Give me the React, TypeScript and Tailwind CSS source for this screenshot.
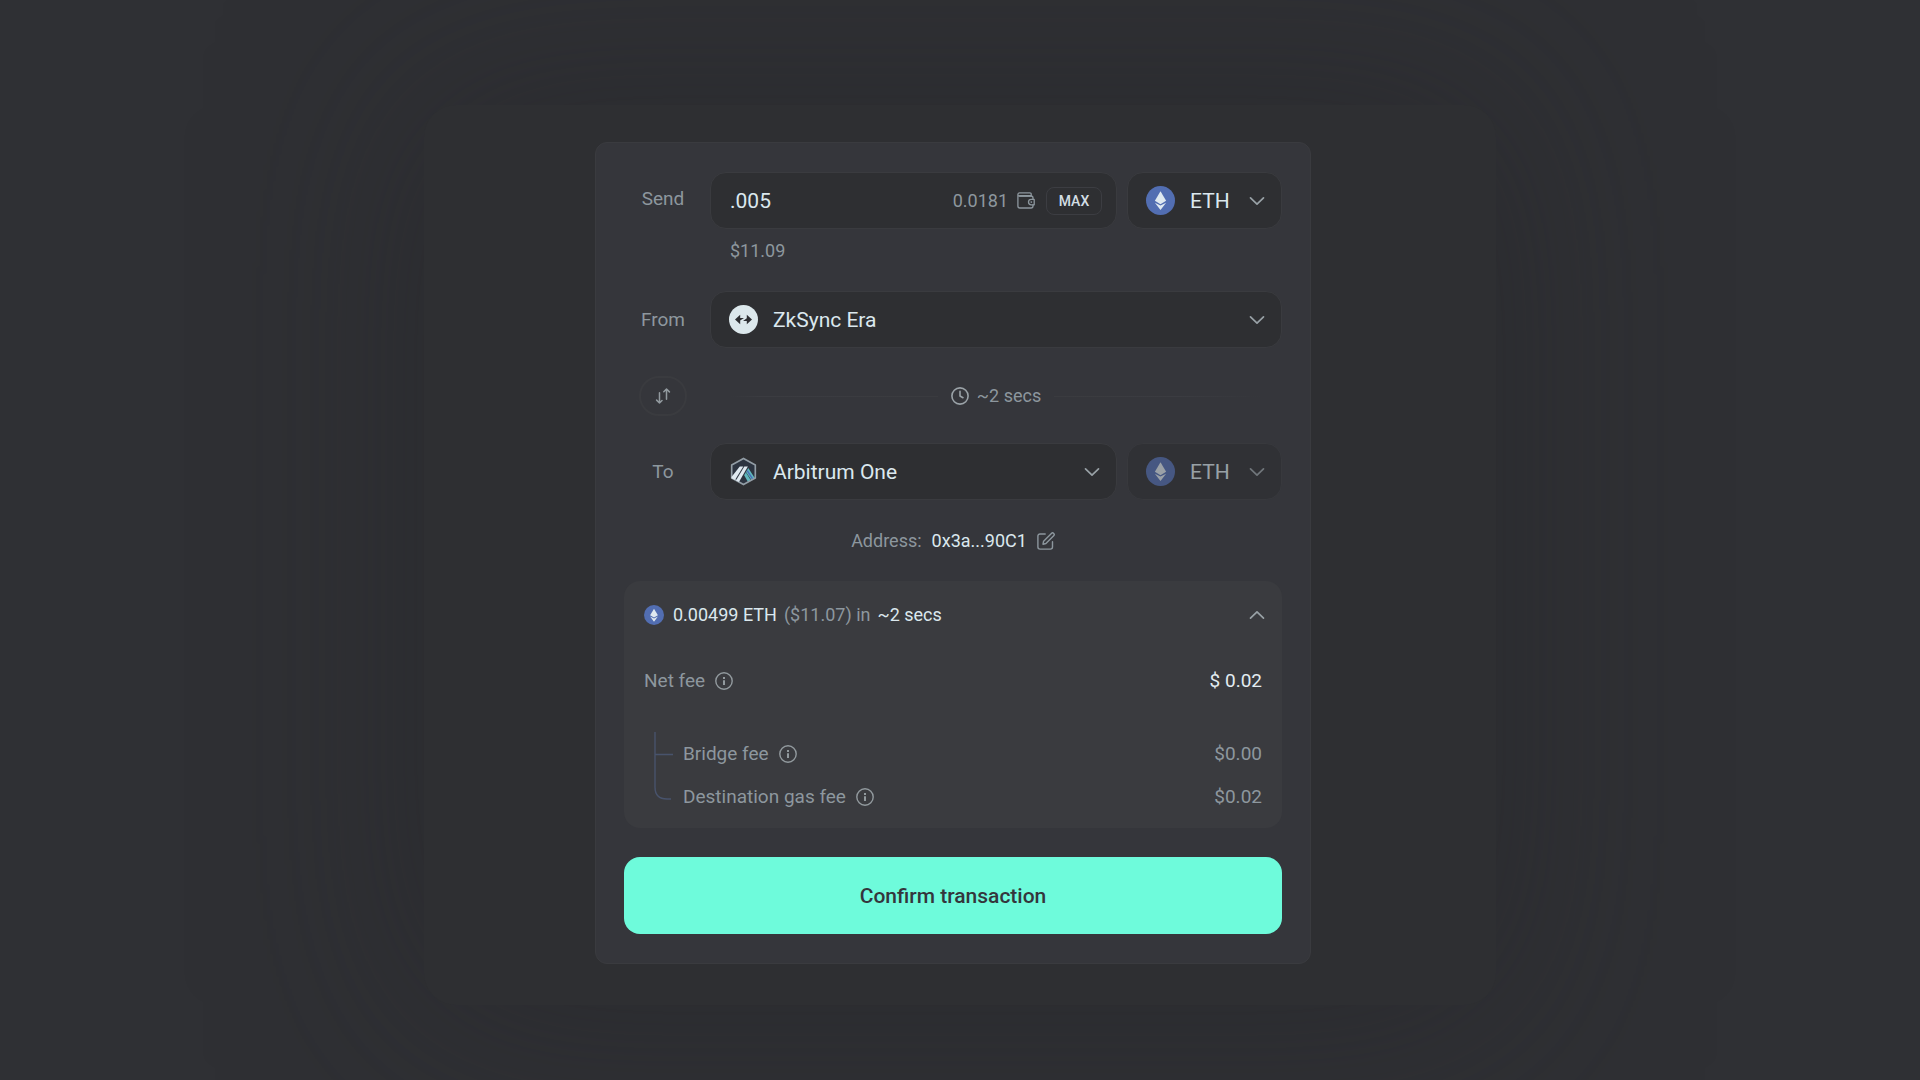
import { useState } from "react";
import type { ReactNode } from "react";

function EthIcon({ className }: { className: string }) {
  return (
    <svg viewBox="0 0 32 32" className={className} aria-hidden="true">
      <circle cx="16" cy="16" r="16" fill="#526eb2" />
      <path d="M16 5.8 22.2 16.4 16 20 9.8 16.4Z" fill="#dfe9f0" />
      <path d="M9.8 18.4 16 21.6 22.2 18.4 16 26.6Z" fill="#dfe9f0" />
    </svg>
  );
}

function ZkSyncIcon({ className }: { className: string }) {
  return (
    <svg viewBox="0 0 29 29" className={className} aria-hidden="true">
      <circle cx="14.5" cy="14.5" r="14.5" fill="#dce8ec" />
      <path d="M6 14.5 11.2 9.8V12.9H15L11.2 15.6V19.2Z" fill="#2e2f33" />
      <path d="M23 14.5 17.8 9.8V13.2L14 16.1H17.8V19.2Z" fill="#2e2f33" />
    </svg>
  );
}

function ArbitrumIcon({ className }: { className: string }) {
  return (
    <svg viewBox="0 0 28 28" className={className} aria-hidden="true">
      <path d="M14 1.4 25.4 7.7V20.3L14 26.6 2.6 20.3V7.7Z" fill="#2c3440" />
      <path d="M16.4 14.6 18.6 10.6 25 20.6 21.8 22.4Z" fill="#5fb8bd" />
      <path d="M14.6 17.6 16.2 14.8 21.2 22.8 18.4 24.2Z" fill="#5fb8bd" />
      <path d="M17.6 13.2 22.8 21.4" stroke="#4a6eb8" strokeWidth="1.4" />
      <path d="M14 1.4 25.4 7.7V20.3L14 26.6 2.6 20.3V7.7Z" fill="none" stroke="#929da5" strokeWidth="1.6" strokeLinejoin="round" />
      <path d="M10.4 9.2H13.8L5.8 22.3 2.4 20.4V19.4Z" fill="#dfe9f0" />
      <path d="M14.8 9.2H18.2L9.6 24.2 6.7 22.6Z" fill="#dfe9f0" />
    </svg>
  );
}

function Chevron({ className, up = false }: { className: string; up?: boolean }) {
  return (
    <svg viewBox="0 0 16 10" className={className} fill="none" stroke="currentColor" strokeWidth="1.7" strokeLinecap="round" strokeLinejoin="round" aria-hidden="true">
      <path d={up ? "M1.5 8.2 8 1.8 14.5 8.2" : "M1.5 1.8 8 8.2 14.5 1.8"} />
    </svg>
  );
}

function WalletIcon({ className }: { className: string }) {
  return (
    <svg viewBox="0 0 18 17" className={className} fill="none" stroke="currentColor" strokeWidth="1.3" strokeLinecap="round" strokeLinejoin="round" aria-hidden="true">
      <path d="M16 7.2V6a2 2 0 0 0-2-2H2.4A1.5 1.5 0 0 1 .9 2.5 1.6 1.6 0 0 1 2.5.9H13a1.2 1.2 0 0 1 1.2 1.2V4M.9 2.5V14a2 2 0 0 0 2 2H14a2 2 0 0 0 2-2v-1.2" />
      <path d="M3 3.9H14" strokeWidth="1.8" />
      <path d="M17.2 7.4h-3a2.7 2.7 0 0 0 0 5.4h3Z" />
      <path d="M14.2 10.1h.2" strokeWidth="1.6" />
    </svg>
  );
}

function SwapIcon({ className }: { className: string }) {
  return (
    <svg viewBox="0 0 16 16" className={className} fill="none" stroke="currentColor" strokeWidth="1.5" strokeLinecap="round" strokeLinejoin="round" aria-hidden="true">
      <path d="M4.5 4.8V15M1.6 12.1 4.5 15 7 12.5M11.5 11.2V1M8.8 3.7 11.5 1 14.4 3.9" />
    </svg>
  );
}

function ClockIcon({ className }: { className: string }) {
  return (
    <svg viewBox="0 0 18 18" className={className} fill="none" stroke="currentColor" strokeWidth="1.6" strokeLinecap="round" strokeLinejoin="round" aria-hidden="true">
      <circle cx="9" cy="9" r="8.1" />
      <path d="M9 4.4V9L12 10.7" />
    </svg>
  );
}

function EditIcon({ className }: { className: string }) {
  return (
    <svg viewBox="0 0 18 18" className={className} fill="none" stroke="currentColor" strokeWidth="1.4" strokeLinecap="round" strokeLinejoin="round" aria-hidden="true">
      <path d="M8.2 2H3A2.1 2.1 0 0 0 .9 4.1V15A2.1 2.1 0 0 0 3 17.1H13.4A2.1 2.1 0 0 0 15.5 15V9.8" />
      <path d="M6 12.2 6.6 9.2 14.4 1.4a1.6 1.6 0 0 1 2.3 2.3L8.9 11.5Z" />
    </svg>
  );
}

function InfoButton({ about }: { about: string }) {
  return (
    <button type="button" aria-label={"About " + about} className="text-[#929a9e]">
      <svg viewBox="0 0 18 18" className="size-[18px]" fill="none" stroke="currentColor" aria-hidden="true">
        <circle cx="9" cy="9" r="8.2" strokeWidth="1.4" />
        <path d="M9 8.2V13" strokeWidth="2" />
        <path d="M9 5V6.9" strokeWidth="2" />
      </svg>
    </button>
  );
}

function Picker({ id, label, value, icon, disabled = false }: { id: string; label: string; value: string; icon: ReactNode; disabled?: boolean }) {
  return (
    <div className={"relative flex items-center " + (disabled ? "opacity-60" : "")}>
      <span className="pointer-events-none absolute left-[19px]">{icon}</span>
      <select
        id={id}
        aria-label={label}
        disabled={disabled}
        className="h-[57px] w-full appearance-none rounded-2xl border border-[#3a3b3f] bg-[#2e2f32] pr-10 pl-[62px] text-[21px] text-[#dbe8ee] opacity-100"
      >
        <option>{value}</option>
      </select>
      <Chevron className="pointer-events-none absolute right-[17px] h-[10px] w-4 text-[#98a1a6]" />
    </div>
  );
}

const rowClass = "grid grid-cols-[78px_minmax(0,1fr)] items-center gap-x-2";
const splitClass = "grid grid-cols-[minmax(0,1fr)_155px] gap-[10px]";

export default function App() {
  const [amount, setAmount] = useState(".005");

  return (
    <main className="flex min-h-screen items-center justify-center bg-[#2f3034] pt-[30px] font-['Roboto',sans-serif] text-[19px] leading-6 text-[#8d979e]">
      <div className="flex w-full max-w-[1072px] justify-center rounded-[32px] bg-[#2e2f32] pt-[37px] pr-[14px] pb-[41px] shadow-[0_0_200px_0_rgba(38,39,42,0.55)]">
        <form className="w-full max-w-[716px] rounded-xl border border-[#3a3b3f] bg-[#35363b] px-7 py-[29px]" onSubmit={(e) => e.preventDefault()}>
          <div className={rowClass}>
            <label htmlFor="amount" className="pb-1 text-center">Send</label>
            <div className={splitClass}>
              <div className="flex h-[57px] items-center rounded-2xl border border-[#3a3b3f] bg-[#2e2f32] pr-[14px] pl-[19px]">
                <input
                  id="amount"
                  value={amount}
                  onChange={(e) => setAmount(e.target.value)}
                  className="min-w-0 flex-1 bg-transparent text-[21px] text-[#dbe8ee] outline-none"
                />
                <span className="text-lg leading-6">0.0181</span>
                <WalletIcon className="ml-[9px] h-[17px] w-[18px] text-[#8d979e]" />
                <button type="button" className="ml-[11px] h-7 w-14 rounded-lg border border-[#3c3d42] text-[14px] font-medium text-[#d3dee4]">
                  MAX
                </button>
              </div>
              <Picker id="send-token" label="Token to send" value="ETH" icon={<EthIcon className="size-[29px]" />} />
            </div>
          </div>
          <p className="mt-[10px] mb-7 pl-[106px] text-lg leading-6">$11.09</p>

          <div className={rowClass}>
            <label htmlFor="from" className="text-center">From</label>
            <Picker id="from" label="From" value="ZkSync Era" icon={<ZkSyncIcon className="size-[29px]" />} />
          </div>

          <div className={rowClass + " mt-7 mb-[27px]"}>
            <button type="button" aria-label="Swap networks" className="mx-auto flex h-10 w-12 items-center justify-center rounded-full border-2 border-[#3a3b3f]">
              <SwapIcon className="size-4 text-[#929a9f]" />
            </button>
            <div className="flex items-center px-5">
              <span className="h-px flex-1 bg-linear-to-r from-transparent via-[#3b3c41] via-15% to-[#3a3b3f]" />
              <ClockIcon className="ml-[13px] size-[18px] text-[#9aa2a7]" />
              <span className="mr-[13px] ml-2 text-lg leading-6">~2 secs</span>
              <span className="h-px flex-1 bg-linear-to-l from-transparent via-[#3b3c41] via-40% to-[#3a3b3f]" />
            </div>
          </div>

          <div className={rowClass}>
            <label htmlFor="to" className="text-center">To</label>
            <div className={splitClass}>
              <Picker id="to" label="To" value="Arbitrum One" icon={<ArbitrumIcon className="size-[29px]" />} />
              <Picker id="to-token" label="Token to receive" value="ETH" icon={<EthIcon className="size-[29px]" />} disabled />
            </div>
          </div>

          <div className="mt-[29px] mb-7 flex items-center justify-center text-lg leading-6">
            <span>Address:</span>
            <span className="ml-[10px] text-[#dbe8ee]">0x3a...90C1</span>
            <button type="button" aria-label="Edit address" className="ml-[10px] text-[#8d979e]">
              <EditIcon className="size-[18px]" />
            </button>
          </div>

          <section className="rounded-2xl bg-[#3a3b3f] px-5 pt-[22px] pb-[19px]">
            <button type="button" aria-expanded="true" className="flex w-full items-center text-lg leading-6">
              <EthIcon className="size-5" />
              <span className="ml-[9px] text-[#dbe8ee]">0.00499 ETH</span>
              <span className="mx-[7px]">($11.07) in</span>
              <span className="text-[#dbe8ee]">~2 secs</span>
              <Chevron up className="-mr-[3px] ml-auto h-[10px] w-4 text-[#98a1a6]" />
            </button>
            <div className="mt-[42px] flex items-center">
              <span className="mr-[10px]">Net fee</span>
              <InfoButton about="net fee" />
              <span className="ml-auto text-[#e3ecf1]">$ 0.02</span>
            </div>
            <div className="mt-[39px] flex gap-[10px] pl-[10px]">
              <svg viewBox="0 0 19 68" className="h-[68px] w-[19px]" fill="none" stroke="#48536c" strokeWidth="1.4" aria-hidden="true">
                <path d="M1 0V55Q1 67 13 67H17M1 22.5H19" />
              </svg>
              <ul className="flex flex-1 flex-col gap-[19px] pt-[10px]">
                <li className="flex items-center">
                  <span className="mr-[10px]">Bridge fee</span>
                  <InfoButton about="bridge fee" />
                  <span className="ml-auto">$0.00</span>
                </li>
                <li className="flex items-center">
                  <span className="mr-[10px]">Destination gas fee</span>
                  <InfoButton about="destination gas fee" />
                  <span className="ml-auto">$0.02</span>
                </li>
              </ul>
            </div>
          </section>

          <button type="submit" className="mt-[29px] h-[77px] w-full rounded-2xl bg-[#6efbdb] text-[21px] font-medium text-[#34363c]">
            Confirm transaction
          </button>
        </form>
      </div>
    </main>
  );
}
